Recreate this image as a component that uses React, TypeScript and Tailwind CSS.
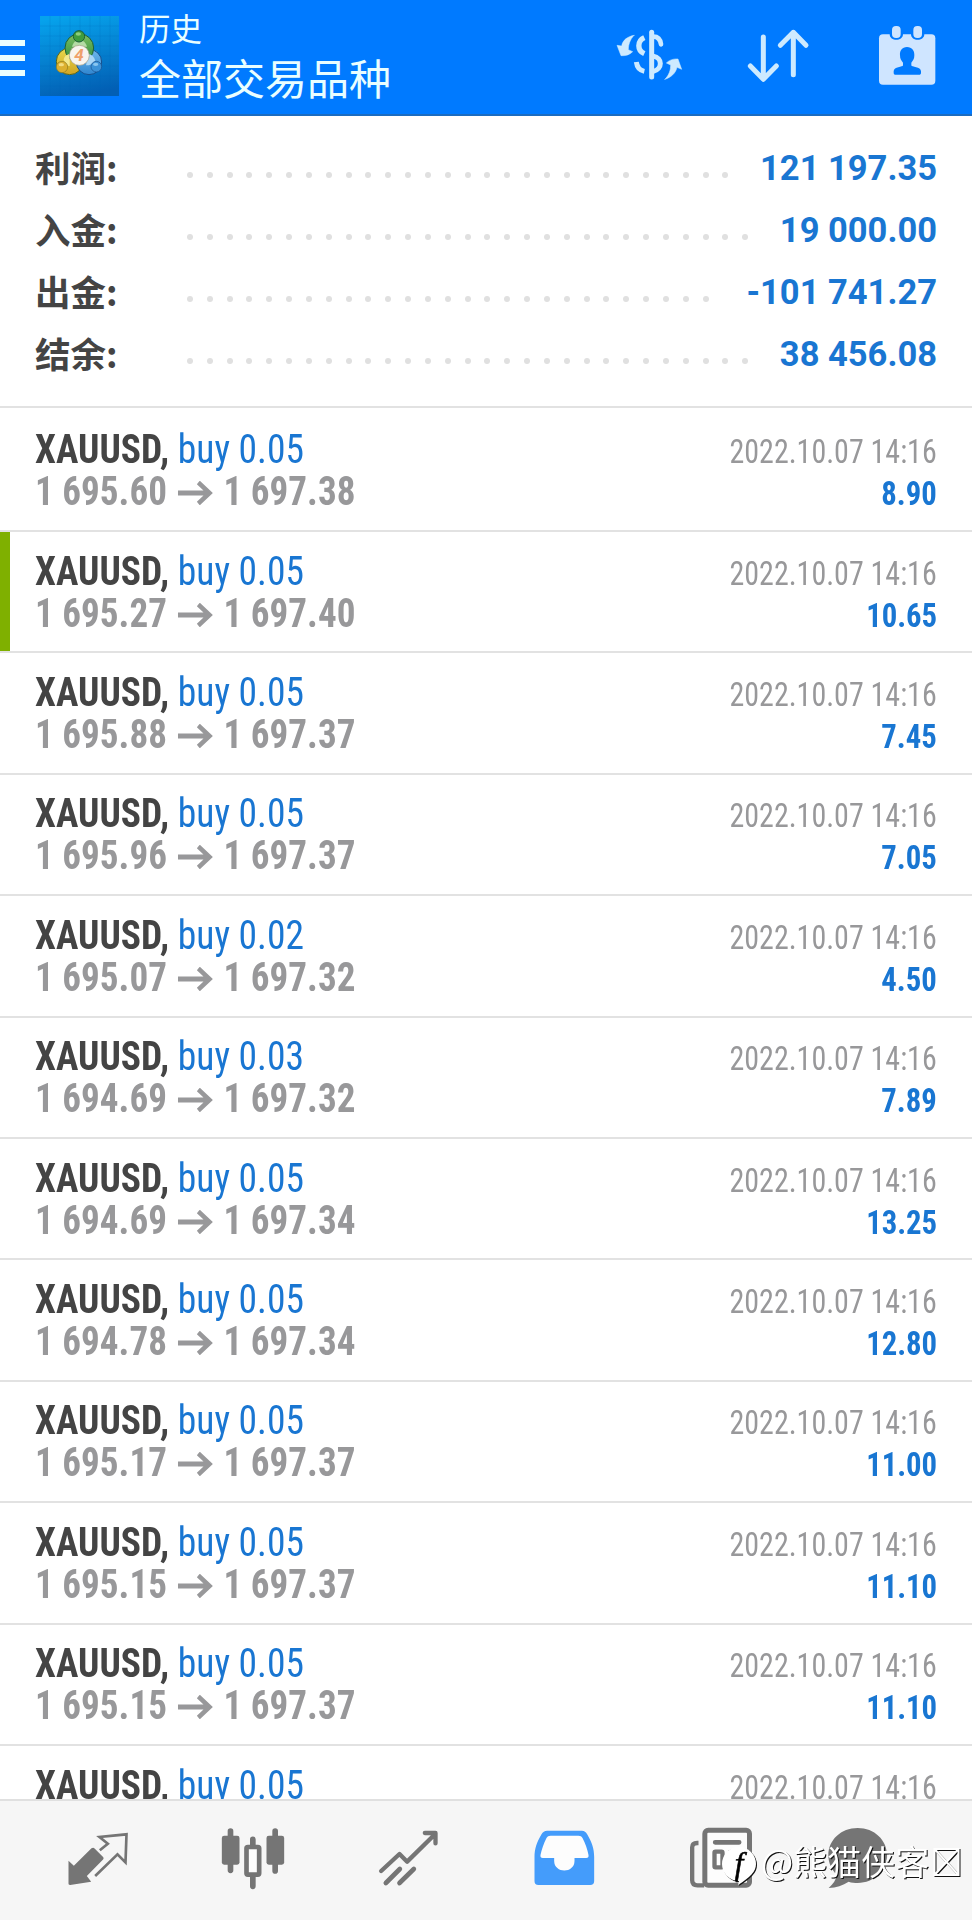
import type { ReactNode } from "react";

interface Deal {
  volume: string;
  open: string;
  close: string;
  profit: string;
  marked?: boolean;
}

interface SummaryLine {
  label: string;
  value: string;
  dots: number;
}

const SUMMARY: SummaryLine[] = [
  { label: "利润:", value: "121 197.35", dots: 28 },
  { label: "入金:", value: "19 000.00", dots: 29 },
  { label: "出金:", value: "-101 741.27", dots: 27 },
  { label: "结余:", value: "38 456.08", dots: 29 },
];

const DEALS: Deal[] = [
  { volume: "0.05", open: "1 695.60", close: "1 697.38", profit: "8.90" },
  { volume: "0.05", open: "1 695.27", close: "1 697.40", profit: "10.65", marked: true },
  { volume: "0.05", open: "1 695.88", close: "1 697.37", profit: "7.45" },
  { volume: "0.05", open: "1 695.96", close: "1 697.37", profit: "7.05" },
  { volume: "0.02", open: "1 695.07", close: "1 697.32", profit: "4.50" },
  { volume: "0.03", open: "1 694.69", close: "1 697.32", profit: "7.89" },
  { volume: "0.05", open: "1 694.69", close: "1 697.34", profit: "13.25" },
  { volume: "0.05", open: "1 694.78", close: "1 697.34", profit: "12.80" },
  { volume: "0.05", open: "1 695.17", close: "1 697.37", profit: "11.00" },
  { volume: "0.05", open: "1 695.15", close: "1 697.37", profit: "11.10" },
  { volume: "0.05", open: "1 695.15", close: "1 697.37", profit: "11.10" },
  { volume: "0.05", open: "1 695.15", close: "1 697.37", profit: "11.10" },
];

function AppLogo() {
  return (
    <svg viewBox="120 48 237 240" className="ml-[15px] h-20 w-[79px] shrink-0">
      <defs>
        <linearGradient id="tile" x1="0.3" y1="0" x2="0.5" y2="1">
          <stop offset="0" stopColor="#06a2ec" />
          <stop offset="0.5" stopColor="#0581d0" />
          <stop offset="1" stopColor="#025fb4" />
        </linearGradient>
        <linearGradient id="green" x1="0" y1="0" x2="0" y2="1">
          <stop offset="0" stopColor="#7fbf62" />
          <stop offset="1" stopColor="#2c8a3a" />
        </linearGradient>
        <linearGradient id="yellow" x1="0" y1="0" x2="0" y2="1">
          <stop offset="0" stopColor="#e9d94e" />
          <stop offset="1" stopColor="#cfa422" />
        </linearGradient>
        <linearGradient id="blue" x1="0" y1="0" x2="0" y2="1">
          <stop offset="0" stopColor="#6fb8ec" />
          <stop offset="1" stopColor="#2f86d0" />
        </linearGradient>
      </defs>
      <rect x="120" y="48" width="237" height="240" fill="url(#tile)" />
      <path
        d="M150 48v240M180 48v240M210 48v240M240 48v240M270 48v240M300 48v240M330 48v240M120 78h237M120 108h237M120 138h237M120 168h237M120 198h237M120 228h237M120 258h237"
        stroke="#0569b8"
        strokeOpacity="0.3"
        strokeWidth="2"
      />
      <circle cx="209" cy="184" r="40" fill="url(#yellow)" stroke="#55661f" strokeWidth="3" />
      <circle cx="267" cy="186" r="38" fill="url(#blue)" stroke="#164f8c" strokeWidth="3" />
      <circle cx="238" cy="144" r="43" fill="url(#green)" stroke="#1d5f35" strokeWidth="3" />
      <path d="M216 140c4-14 12-20 22-20s19 6 23 20z" fill="#b4dba4" />
      <path d="M191 180c2-12 8-16 18-18v36c-8 0-12-6-18-18z" fill="#f3e88c" />
      <path d="M286 182c-4-12-10-18-20-20l-8 34c12 0 22-4 28-14z" fill="#a9d6f6" />
      <circle cx="237" cy="109" r="17" fill="#3f9c3d" stroke="#1d5f35" strokeWidth="3" />
      <circle cx="186" cy="201" r="17" fill="#dcb030" stroke="#8c7a1c" strokeWidth="2" />
      <circle cx="289" cy="200" r="16" fill="#3b92d8" stroke="#164f8c" strokeWidth="2" />
      <ellipse cx="235" cy="102" rx="8" ry="5" fill="#8fce7c" />
      <ellipse cx="184" cy="194" rx="8" ry="5" fill="#f3dc80" />
      <ellipse cx="287" cy="193" rx="8" ry="5" fill="#8ac6f0" />
      <circle cx="238" cy="166" r="30" fill="#f8f4ee" stroke="#a39c84" strokeWidth="2" />
      <text x="237" y="184" textAnchor="middle" fontSize="51" fontStyle="italic" fontWeight="700" fontFamily="Roboto, sans-serif" fill="#efa06a">
        4
      </text>
    </svg>
  );
}

function CurrencyIcon() {
  return (
    <svg viewBox="105 75 204 180" className="h-[60px] w-[68px]" fill="none" stroke="#cdeaff" strokeLinecap="round">
      <path d="M215 97v134" strokeWidth="15" />
      <path d="M220 110c13 0 21 7 23 23" strokeWidth="14" />
      <path d="M220 169c28 4 28 38 0 45" strokeWidth="15" />
      <path d="M193 113c-22 10-22 38 0 48" strokeWidth="16" strokeLinecap="butt" />
      <path d="M169 186c2 16 10 25 24 28" strokeWidth="15" strokeLinecap="butt" />
      <path d="M162 106c-20 4-34 14-37 32l-14-2 12 31c12 1 26-2 35-12l-13-6c0-15 5-30 17-43z" fill="#cdeaff" strokeWidth="1.5" />
      <path d="M255 238c18-6 32-18 36-36l14 6-11-31c-12-1-25 2-35 12l13 6c0 16-5 30-17 43z" fill="#cdeaff" strokeWidth="1.5" />
    </svg>
  );
}

function SortIcon() {
  return (
    <svg viewBox="495 75 198 180" className="h-[60px] w-[66px]" fill="none" stroke="#cdeaff" strokeWidth="15" strokeLinecap="round" strokeLinejoin="round">
      <path d="M550 111v126M511 198l39 40 39-40" />
      <path d="M640 224V97M601 136l39-39 38 39" />
    </svg>
  );
}

function CalendarIcon() {
  return (
    <svg viewBox="891 75 180 183" className="h-[61px] w-[60px]">
      <rect x="897" y="103" width="169" height="151" rx="12" fill="#cfe5ff" />
      <path d="M929 100v3c0 22 40 22 40 0v-3zM993 100v3c0 22 40 22 40 0v-3z" fill="#007aff" />
      <rect x="936" y="78" width="26" height="36" rx="12" fill="#cfe5ff" />
      <rect x="1000" y="78" width="26" height="36" rx="12" fill="#cfe5ff" />
      <path d="M981 141c15 0 23 11 22 25 0 11-4 16-9 22v8c0 6 29 4 29 18v4c0 4-2 6-6 6h-70c-4 0-6-2-6-6v-4c0-14 28-12 28-18v-8c-5-6-9-11-9-22-1-14 6-25 21-25z" fill="#007aff" />
    </svg>
  );
}

function Header() {
  return (
    <header className="flex h-[116px] shrink-0 items-start border-b-2 border-[#1c6cc0] bg-[#007aff] text-[#e9feff]">
      <div className="mt-10 flex w-[25px] shrink-0 flex-col gap-[9px]">
        <span className="h-1.5 bg-current" />
        <span className="h-1.5 bg-current" />
        <span className="h-1.5 bg-current" />
      </div>
      <div className="mt-4">
        <AppLogo />
      </div>
      <div className="ml-[20px] flex flex-col font-['Noto_Sans_CJK_SC',sans-serif]">
        <span className="mt-[7px] text-[31.5px] leading-[40px]">历史</span>
        <span className="mt-1 text-[42px] leading-[52px]">全部交易品种</span>
      </div>
      <div className="mt-[25px] mr-[35px] ml-auto flex items-start">
        <CurrencyIcon />
        <div className="ml-[62px]"><SortIcon /></div>
        <div className="ml-[66px]"><CalendarIcon /></div>
      </div>
    </header>
  );
}

function Summary() {
  return (
    <section className="h-[292px] shrink-0 border-b-2 border-[#e2e2e2] pt-[20px]">
      {SUMMARY.map((line) => (
        <div key={line.label} className="flex h-[62px] items-center px-[35px]">
          <span className="w-[152px] font-['Noto_Sans_CJK_SC',sans-serif] text-[35.5px] leading-[62px] font-bold text-[#444444]">
            {line.label}
          </span>
          <span className="mt-[15px] flex gap-[13.84px]">
            {Array.from({ length: line.dots }, (_, i) => (
              <i key={i} className="size-1.5 rounded-full bg-[#e0e0e0]" />
            ))}
          </span>
          <span className="mt-0.5 ml-auto font-[Roboto,sans-serif] text-[34.5px] leading-[62px] font-bold whitespace-nowrap text-[#1976d2]">
            {line.value}
          </span>
        </div>
      ))}
    </section>
  );
}

function DealRow({ deal, first }: { deal: Deal; first: boolean }) {
  return (
    <div
      className={`relative shrink-0 border-b-2 border-[#e2e2e2] px-[35px] font-['Roboto_Condensed',Roboto,sans-serif] whitespace-nowrap [font-stretch:75%] ${
        first ? "h-[124px] pt-[21.4px]" : "h-[121.4px] pt-[18.6px]"
      }`}
    >
      {deal.marked && <span className="absolute top-0 left-0 h-full w-2.5 bg-[#7fb000]" />}
      <div className="flex items-baseline justify-between leading-[42px]">
        <span className="origin-left scale-x-[0.937] text-[40px]">
          <b className="text-[#444444]">XAUUSD,</b> <span className="text-[#1976d2]">buy {deal.volume}</span>
        </span>
        <span className="origin-right scale-x-[0.922] text-[32.5px] text-[#98989a]">2022.10.07 14:16</span>
      </div>
      <div className="-mt-0.5 flex items-baseline justify-between leading-[42px] font-bold">
        <span className="flex origin-left scale-x-[0.928] items-baseline text-[40px] text-[#98989a]">
          {deal.open}
          <svg viewBox="0 0 38 24" preserveAspectRatio="none" className="mr-[11px] ml-3 h-6 w-[38px]" fill="none" stroke="currentColor" strokeWidth="4.8">
            <path d="M0 12h35M22 1.5L34 12L22 22.5" />
          </svg>
          {deal.close}
        </span>
        <span className="origin-right scale-x-[0.945] text-[32.5px] text-[#1976d2]">{deal.profit}</span>
      </div>
    </div>
  );
}

function NavItem({ viewBox, children, last = false }: { viewBox: string; children: ReactNode; last?: boolean }) {
  return (
    <button type="button" className={`flex shrink-0 justify-center text-[#757575] ${last ? "w-[115px]" : "w-[156px]"}`}>
      <svg viewBox={viewBox} className="h-[70px] w-20" fill="none" stroke="currentColor" strokeLinecap="round" strokeLinejoin="round">
        {children}
      </svg>
    </button>
  );
}

function BottomNav() {
  return (
    <nav className="relative flex h-[121px] shrink-0 items-start border-t-2 border-[#e0e0e0] bg-[#f6f6f6] pt-6 pl-[19.5px]">
      <NavItem viewBox="172.5 285 240 210">
        <path d="M204 392l16 15 53-52c4-3 7-2 10 1l24 24c3 3 3 6 0 9l-48 49 13 17-63 10c-4 0-5-2-5-5z" fill="currentColor" stroke="none" />
        <path d="M298 361l24-20-25-20 81-8-3 84-24-24-67 65" strokeWidth="8" strokeLinecap="butt" strokeLinejoin="miter" />
      </NavItem>
      <NavItem viewBox="640.5 285 240 210">
        <path d="M690 303v118M824 303v120M757 328v20M757 440v29" strokeWidth="17" />
        <rect x="664" y="317" width="53" height="87" rx="7" fill="currentColor" stroke="none" />
        <rect x="798" y="317" width="53" height="87" rx="7" fill="currentColor" stroke="none" />
        <rect x="738" y="351" width="38" height="83" rx="4" strokeWidth="14" fill="#fdfdfd" />
      </NavItem>
      <NavItem viewBox="148.5 285 240 210">
        <path d="M182 423l55-51 23 23 78-77M313 309h32v31" strokeWidth="13" />
        <path d="M335 305h14v20z" fill="currentColor" stroke="none" />
        <path d="M196 459l42-42M237 459l43-42" strokeWidth="14" />
      </NavItem>
      <NavItem viewBox="616.5 285 240 210">
        <path d="M680 302h104c8 0 12 4 16 11 14 24 21 43 21 68v72c0 8-4 12-12 12H654c-8 0-12-4-12-12v-72c0-25 7-44 21-68 4-7 9-11 17-11z" fill="#449cfb" stroke="none" />
        <path d="M690 317h84c6 0 9 2 12 7 8 15 15 35 18 51 1 6-1 9-7 9h-35v9c0 38-61 38-61 0v-9h-34c-6 0-8-3-7-9 4-18 10-36 18-51 3-5 6-7 12-7z" fill="#fdfdfd" stroke="none" />
      </NavItem>
      <NavItem viewBox="124.5 285 240 210">
        <path d="M174 339h-4c-10 0-15 4-15 13v99c0 10 5 15 16 15h20" strokeWidth="13" strokeLinecap="butt" />
        <rect x="193" y="301" width="134" height="165" rx="10" strokeWidth="15" fill="#fdfdfd" />
        <path d="M224 337h72M270 366h27M270 386h27" strokeWidth="14" />
        <rect x="222" y="365" width="24" height="47" rx="3" strokeWidth="13" />
      </NavItem>
      <NavItem viewBox="531 285 240 210" last>
        <path d="M653 294c50 0 88 36 88 82s-38 83-88 83c-9 0-18-1-27-4-18 11-37 18-60 19 13-12 22-24 25-39-16-15-26-36-26-59 0-46 38-82 88-82z" fill="currentColor" stroke="none" />
      </NavItem>

      {/* Poster's signature stamped over the tab icons */}
      <div className="absolute top-[41px] left-[721px] flex h-12 items-start text-white [filter:drop-shadow(1.5px_1.5px_0_#111)]">
        <svg viewBox="0 0 36 40" className="mt-1 h-10 w-9">
          <path d="M18 1a17 17 0 0 1 17 17c0 8-6 13-18 21l1-4A17 17 0 1 1 18 1z" fill="white" />
          <text x="18" y="28" textAnchor="middle" fontSize="31" fontStyle="italic" fontFamily="'Liberation Serif', serif" fill="black" stroke="black" strokeWidth="0.6">
            f
          </text>
        </svg>
        <span className="-mt-[5px] ml-1 font-['Noto_Sans_CJK_SC',sans-serif] text-[34px] leading-[48px] font-normal whitespace-nowrap">@熊猫侠客</span>
        <svg viewBox="0 0 27 30" className="mt-[5px] ml-1 h-[30px] w-[27px]" fill="none" stroke="white" strokeWidth="2">
          <path d="M1.5 2h24v26h-24zM1.5 2l24 26M25.5 2l-24 26" />
        </svg>
      </div>
    </nav>
  );
}

export default function App() {
  return (
    <div className="flex h-[1920px] w-[972px] flex-col overflow-hidden bg-white">
      <Header />
      <Summary />
      <main className="flex min-h-0 flex-1 flex-col overflow-hidden">
        {DEALS.map((deal, i) => (
          <DealRow key={i} deal={deal} first={i === 0} />
        ))}
      </main>
      <BottomNav />
    </div>
  );
}
